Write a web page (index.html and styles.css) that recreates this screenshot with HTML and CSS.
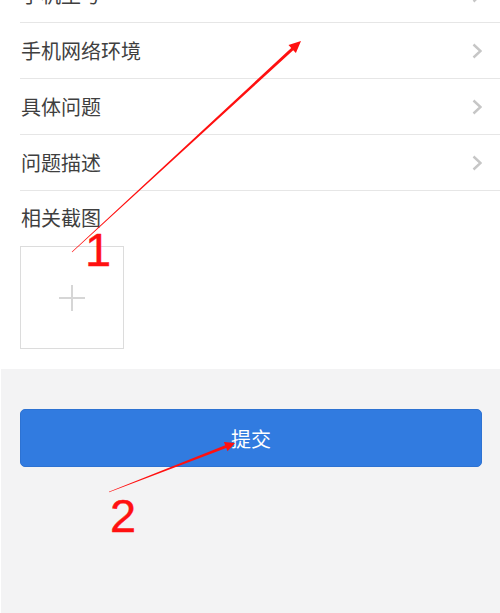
FILE: index.html
```html
<!DOCTYPE html>
<html lang="zh">
<head>
<meta charset="utf-8">
<title>反馈</title>
<link rel="stylesheet" href="styles.css">
</head>
<body>
<div class="page">
  <section class="panel">
    <div class="row"><span class="label">手机型号</span><svg class="chev" width="10" height="16" viewBox="0 0 10 16"><polyline points="1.5,1.5 8.5,8 1.5,14.5" fill="none" stroke="#c6c6c6" stroke-width="2.4"/></svg></div>
    <div class="row"><span class="label">手机网络环境</span><svg class="chev" width="10" height="16" viewBox="0 0 10 16"><polyline points="1.5,1.5 8.5,8 1.5,14.5" fill="none" stroke="#c6c6c6" stroke-width="2.4"/></svg></div>
    <div class="row"><span class="label">具体问题</span><svg class="chev" width="10" height="16" viewBox="0 0 10 16"><polyline points="1.5,1.5 8.5,8 1.5,14.5" fill="none" stroke="#c6c6c6" stroke-width="2.4"/></svg></div>
    <div class="row"><span class="label">问题描述</span><svg class="chev" width="10" height="16" viewBox="0 0 10 16"><polyline points="1.5,1.5 8.5,8 1.5,14.5" fill="none" stroke="#c6c6c6" stroke-width="2.4"/></svg></div>
    <div class="shots">
      <div class="shots-label">相关截图</div>
      <div class="upload">
        <svg width="28" height="28" viewBox="0 0 28 28"><path d="M14 1V27M1 14H27" stroke="#d6d6d6" stroke-width="2"/></svg>
      </div>
    </div>
  </section>
  <div class="actions">
    <button class="submit">提交</button>
  </div>
</div>
<svg class="marks" width="500" height="613" viewBox="0 0 500 613">
  <polygon fill="#ff1010" points="72.2,252.2 293.2,50.2 295.9,53.1 301,41 288.5,45.1 291.2,48.0 71.8,251.8"/>
  <polygon fill="#ff1010" points="109.1,492.3 226.2,448.0 227.5,451.3 235,443 223.9,441.9 225.2,445.2 108.9,491.7"/>
  <text class="num" x="85" y="266">1</text>
  <text class="num" x="110" y="532">2</text>
</svg>
</body>
</html>
```
FILE: styles.css
```css
html, body {
  margin: 0;
  padding: 0;
}
body {
  width: 500px;
  height: 613px;
  overflow: hidden;
  background: #f3f3f4;
  box-shadow: inset 1px 0 0 #ffffff;
  font-family: "Noto Sans CJK SC", "Noto Sans", sans-serif;
  position: relative;
}
.panel {
  background: #ffffff;
  margin-top: -33px;
  padding-left: 20px;
}
.row {
  height: 55px;
  border-bottom: 1px solid #e6e6e6;
  display: flex;
  align-items: center;
  justify-content: space-between;
  padding-right: 18px;
}
.label {
  font-size: 20px;
  color: #3f3f3f;
  line-height: 28px;
  padding-left: 1px;
}
.chev {
  display: block;
}
.shots {
  padding-top: 13px;
  padding-bottom: 20px;
}
.shots-label {
  font-size: 20px;
  line-height: 28px;
  color: #3f3f3f;
  padding-left: 1px;
}
.upload {
  margin-top: 14px;
  width: 104px;
  height: 103px;
  box-sizing: border-box;
  border: 1px solid #dcdcdc;
  display: flex;
  align-items: center;
  justify-content: center;
}
.upload svg {
  display: block;
}
.actions {
  padding: 40px 18px 0 20px;
}
.submit {
  display: block;
  width: 100%;
  height: 58px;
  border: 1px solid #2d72d2;
  border-radius: 5px;
  background: #317be0;
  color: #ffffff;
  font-family: "Noto Sans CJK SC", "Noto Sans", sans-serif;
  font-size: 20px;
  padding: 0;
}
.marks {
  position: absolute;
  left: 0;
  top: 0;
  pointer-events: none;
}
.num {
  font-family: "Liberation Sans", Arial, sans-serif;
  font-size: 47px;
  fill: #ff1010;
  stroke: #ff1010;
  stroke-width: 0.4px;
}
```
